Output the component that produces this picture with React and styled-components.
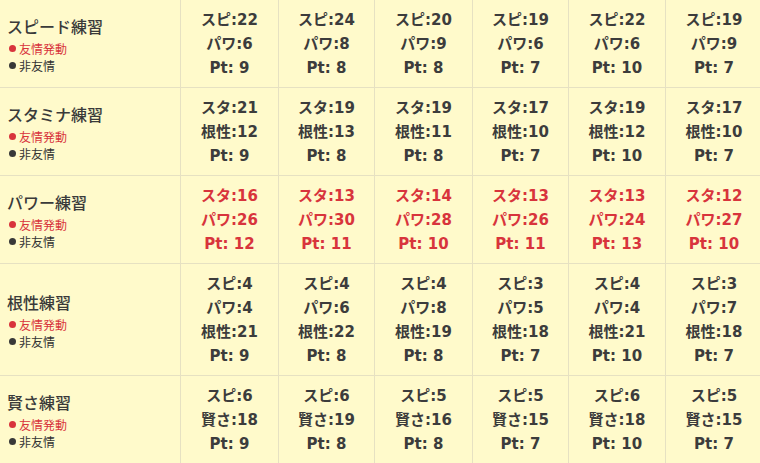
import React from "react";
import styled, { createGlobalStyle } from "styled-components";

const Global = createGlobalStyle`
  html, body { margin: 0; padding: 0; background: #fffacb; overflow: hidden; }
  body { font-family: "Noto Sans CJK JP", "Noto Sans", sans-serif; color: #383838; }
`;

const Table = styled.table`
  border-collapse: collapse;
  table-layout: fixed;
  width: 763px;
  margin-left: -1px;
  margin-top: -1px;
  background: #fffacb;
`;

const Col = styled.col`
  width: ${(p) => p.$w}px;
`;

const Row = styled.tr``;

const HeadCell = styled.th`
  border: 1px solid #e6e1c2;
  padding: 0 0 0 7px;
  text-align: left;
  vertical-align: middle;
  font-weight: normal;
  box-sizing: border-box;
`;

const Title = styled.div`
  font-size: 16px;
  line-height: 24px;
  margin-bottom: 2px;
  color: #3a3a3a;
  font-weight: 500;
`;

const Legend = styled.div`
  display: flex;
  align-items: center;
  font-size: 12px;
  line-height: 17px;
  padding-left: 2px;
  color: ${(p) => (p.$red ? "#d8343c" : "#333")};
`;

const Dot = styled.span`
  display: inline-block;
  width: 7px;
  height: 7px;
  border-radius: 50%;
  background: ${(p) => (p.$red ? "#d8343c" : "#383838")};
  margin-right: 3px;
`;

const StatCell = styled.td`
  border: 1px solid #e6e1c2;
  padding: 7.5px 0;
  text-align: center;
  vertical-align: middle;
  font-family: "DejaVu Sans", "Noto Sans CJK JP", sans-serif;
  font-size: 15px;
  font-weight: bold;
  line-height: 24px;
  color: ${(p) => (p.$red ? "#d8343c" : "#3c3c3c")};
`;

const Line = styled.div`
  white-space: nowrap;
`;

const colWidths = [181, 98, 96, 98, 96, 97, 97];

const rows = [
  {
    title: "スピード練習",
    cells: [
      ["スピ:22", "パワ:6", "Pt: 9"],
      ["スピ:24", "パワ:8", "Pt: 8"],
      ["スピ:20", "パワ:9", "Pt: 8"],
      ["スピ:19", "パワ:6", "Pt: 7"],
      ["スピ:22", "パワ:6", "Pt: 10"],
      ["スピ:19", "パワ:9", "Pt: 7"],
    ],
  },
  {
    title: "スタミナ練習",
    cells: [
      ["スタ:21", "根性:12", "Pt: 9"],
      ["スタ:19", "根性:13", "Pt: 8"],
      ["スタ:19", "根性:11", "Pt: 8"],
      ["スタ:17", "根性:10", "Pt: 7"],
      ["スタ:19", "根性:12", "Pt: 10"],
      ["スタ:17", "根性:10", "Pt: 7"],
    ],
  },
  {
    title: "パワー練習",
    red: true,
    cells: [
      ["スタ:16", "パワ:26", "Pt: 12"],
      ["スタ:13", "パワ:30", "Pt: 11"],
      ["スタ:14", "パワ:28", "Pt: 10"],
      ["スタ:13", "パワ:26", "Pt: 11"],
      ["スタ:13", "パワ:24", "Pt: 13"],
      ["スタ:12", "パワ:27", "Pt: 10"],
    ],
  },
  {
    title: "根性練習",
    cells: [
      ["スピ:4", "パワ:4", "根性:21", "Pt: 9"],
      ["スピ:4", "パワ:6", "根性:22", "Pt: 8"],
      ["スピ:4", "パワ:8", "根性:19", "Pt: 8"],
      ["スピ:3", "パワ:5", "根性:18", "Pt: 7"],
      ["スピ:4", "パワ:4", "根性:21", "Pt: 10"],
      ["スピ:3", "パワ:7", "根性:18", "Pt: 7"],
    ],
  },
  {
    title: "賢さ練習",
    cells: [
      ["スピ:6", "賢さ:18", "Pt: 9"],
      ["スピ:6", "賢さ:19", "Pt: 8"],
      ["スピ:5", "賢さ:16", "Pt: 8"],
      ["スピ:5", "賢さ:15", "Pt: 7"],
      ["スピ:6", "賢さ:18", "Pt: 10"],
      ["スピ:5", "賢さ:15", "Pt: 7"],
    ],
  },
];

export default function App() {
  return (
    <>
      <Global />
      <Table>
        <colgroup>
          {colWidths.map((w, i) => (
            <Col key={i} $w={w} />
          ))}
        </colgroup>
        <tbody>
          {rows.map((r) => (
            <Row key={r.title}>
              <HeadCell>
                <Title>{r.title}</Title>
                <Legend $red>
                  <Dot $red />
                  友情発動
                </Legend>
                <Legend>
                  <Dot />
                  非友情
                </Legend>
              </HeadCell>
              {r.cells.map((c, i) => (
                <StatCell key={i} $red={r.red}>
                  {c.map((l, j) => (
                    <Line key={j}>{l}</Line>
                  ))}
                </StatCell>
              ))}
            </Row>
          ))}
        </tbody>
      </Table>
    </>
  );
}
